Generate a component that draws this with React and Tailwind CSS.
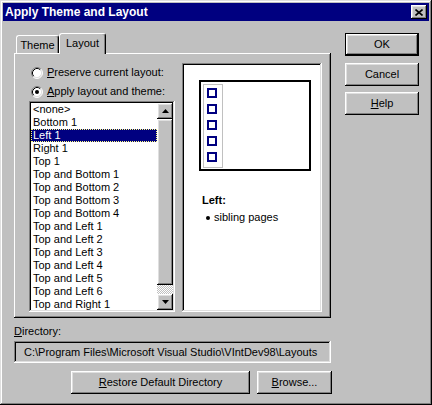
import React from 'react';

const raised = 'bg-[#c0c0c0] shadow-[inset_-1px_-1px_#000,inset_1px_1px_#fff,inset_-2px_-2px_#808080,inset_2px_2px_#dfdfdf]';
const sunken = 'shadow-[inset_-1px_-1px_#fff,inset_1px_1px_#808080,inset_-2px_-2px_#dfdfdf,inset_2px_2px_#000]';

const layouts = [
  '<none>',
  'Bottom 1',
  'Left 1',
  'Right 1',
  'Top 1',
  'Top and Bottom 1',
  'Top and Bottom 2',
  'Top and Bottom 3',
  'Top and Bottom 4',
  'Top and Left 1',
  'Top and Left 2',
  'Top and Left 3',
  'Top and Left 4',
  'Top and Left 5',
  'Top and Left 6',
  'Top and Right 1',
];

const Radio = ({ checked }) => (
  <svg width="12" height="12" viewBox="0 0 12 12" className="shrink-0">
    <circle cx="6" cy="6" r="5" fill="#fff" />
    <path d="M2.11 9.89A5.5 5.5 0 0 1 9.89 2.11" stroke="#808080" fill="none" />
    <path d="M9.89 2.11A5.5 5.5 0 0 1 2.11 9.89" stroke="#fff" fill="none" />
    <path d="M2.82 9.18A4.5 4.5 0 0 1 9.18 2.82" stroke="#000" fill="none" />
    <path d="M9.18 2.82A4.5 4.5 0 0 1 2.82 9.18" stroke="#dfdfdf" fill="none" />
    {checked && <circle cx="6" cy="6" r="2" fill="#000" />}
  </svg>
);

const Button = ({ children, className = '' }) => (
  <div className={`${raised} flex items-center justify-center h-[23px] ${className}`}>{children}</div>
);

const Arrow = ({ down }) => (
  <svg width="7" height="4" viewBox="0 0 7 4">
    {down ? <path d="M0 0h7L3.5 4z" fill="#000" /> : <path d="M0 4h7L3.5 0z" fill="#000" />}
  </svg>
);

export default function App() {
  return (
    <div
      className="w-[432px] h-[405px] p-[3px] bg-[#c0c0c0] text-[11px] text-black shadow-[inset_-1px_-1px_#000,inset_1px_1px_#dfdfdf,inset_-2px_-2px_#808080,inset_2px_2px_#fff]"
      style={{ fontFamily: '"Liberation Sans", Arial, sans-serif' }}
    >
      {/* title bar */}
      <div className="h-[18px] bg-[#000080] flex items-center justify-between pl-[2px] pr-[2px]">
        <span className="text-white font-bold text-[12px] leading-none">Apply Theme and Layout</span>
        <div className={`${raised} w-[16px] h-[14px] flex items-center justify-center`}>
          <svg width="8" height="7" viewBox="0 0 8 7">
            <path d="M0.5 0.5l7 6M7.5 0.5l-7 6" stroke="#000" strokeWidth="1.6" />
          </svg>
        </div>
      </div>

      <div className="flex pl-[11px]">
        {/* left part */}
        <div className="pt-[12px]">
          <div className="relative z-10 flex items-end h-[21px] -mb-[1px]">
            <div className="ml-[2px] mb-[1px] w-[43px] h-[18px] bg-[#c0c0c0] border-l border-t border-white rounded-tl-[3px] rounded-tr-[3px] border-r border-r-black shadow-[inset_-1px_0_#808080] flex items-center justify-center pt-[1px]">
              Theme
            </div>
            <div className="w-[47px] h-[21px] bg-[#c0c0c0] border-l border-t border-white rounded-tl-[3px] rounded-tr-[3px] border-r border-r-black shadow-[inset_-1px_0_#808080] flex items-center justify-center pb-[1px]">
              Layout
            </div>
          </div>

          <div className="relative z-0 w-[317px] h-[265px] bg-[#c0c0c0] shadow-[inset_-1px_-1px_#000,inset_1px_1px_#fff,inset_-2px_-2px_#808080] flex pl-[15px]">
            {/* options + list */}
            <div className="w-[146px] pt-[13px]">
              <div className="flex items-center h-[13px] pl-[2px] gap-[4px]">
                <Radio />
                <span>
                  <span className="underline">P</span>reserve current layout:
                </span>
              </div>
              <div className="flex items-center h-[13px] pl-[2px] gap-[4px] mt-[6px]">
                <Radio checked />
                <span>
                  <span className="underline">A</span>pply layout and theme:
                </span>
              </div>
              <div className={`${sunken} mt-[3px] w-[146px] h-[211px] p-[2px] bg-white flex`}>
                <div className="w-[126px] overflow-hidden">
                  {layouts.map((name, i) => (
                    <div
                      key={name}
                      className={
                        i === 2
                          ? 'h-[13px] leading-[13px] pl-[2px] bg-[#000080] text-white outline-1 outline-dotted outline-[#ffff80] -outline-offset-1 whitespace-nowrap'
                          : 'h-[13px] leading-[13px] pl-[2px] whitespace-nowrap'
                      }
                    >
                      {name}
                    </div>
                  ))}
                </div>
                <div className="w-[16px] flex flex-col">
                  <div className={`${raised} h-[16px] flex items-center justify-center`}>
                    <Arrow />
                  </div>
                  <div className={`${raised} h-[166px]`} />
                  <div className="flex-1 bg-[repeating-conic-gradient(#c0c0c0_0_25%,#fff_0_50%)] bg-[length:2px_2px]" />
                  <div className={`${raised} h-[16px] flex items-center justify-center`}>
                    <Arrow down />
                  </div>
                </div>
              </div>
            </div>

            {/* preview */}
            <div className="ml-[7px] pt-[10px]">
              <div className={`${sunken} w-[140px] h-[249px] bg-white p-[2px]`}>
                <div className="ml-[15px] mt-[15px] w-[112px] h-[91px] border-2 border-black">
                  <div className="ml-[2px] mt-[2px] w-[20px] h-[84px] border border-[#c0c0c0] flex flex-col gap-[6px] pl-[3px] pt-[3px]">
                    <div className="w-[10px] h-[10px] border-2 border-[#000080]" />
                    <div className="w-[10px] h-[10px] border-2 border-[#000080]" />
                    <div className="w-[10px] h-[10px] border-2 border-[#000080]" />
                    <div className="w-[10px] h-[10px] border-2 border-[#000080]" />
                    <div className="w-[10px] h-[10px] border-2 border-[#000080]" />
                  </div>
                </div>
                <div className="ml-[18px] mt-[23px] h-[13px] leading-[13px] font-bold">Left:</div>
                <div className="ml-[22px] mt-[4px] h-[13px] flex items-center gap-[4px]">
                  <div className="w-[4px] h-[4px] rounded-full bg-black" />
                  <span className="leading-[13px]">sibling pages</span>
                </div>
              </div>
            </div>
          </div>

          <div className="mt-[7px] h-[13px] leading-[13px]">
            <span className="underline">D</span>irectory:
          </div>
          <div className={`${sunken} mt-[3px] w-[317px] h-[22px] flex items-center pl-[10px] whitespace-nowrap`}>
            C:\Program Files\Microsoft Visual Studio\VIntDev98\Layouts
          </div>
          <div className="mt-[8px] flex">
            <Button className="ml-[57px] w-[179px]">
              <span>
                <span className="underline">R</span>estore Default Directory
              </span>
            </Button>
            <Button className="ml-[7px] w-[75px]">
              <span>
                <span className="underline">B</span>rowse...
              </span>
            </Button>
          </div>
        </div>

        {/* right buttons */}
        <div className="ml-[13px] pt-[12px] flex flex-col">
          <div className="w-[74px] h-[23px] border border-black">
            <div className={`${raised} w-full h-full flex items-center justify-center`}>OK</div>
          </div>
          <Button className="w-[74px] mt-[7px]">Cancel</Button>
          <Button className="w-[74px] mt-[6px]">
            <span>
              <span className="underline">H</span>elp
            </span>
          </Button>
        </div>
      </div>
    </div>
  );
}
